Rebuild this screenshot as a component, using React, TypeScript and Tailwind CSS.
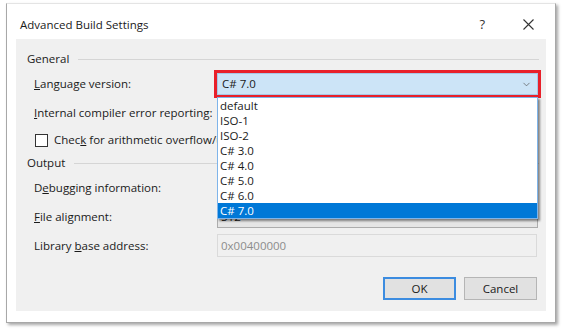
import { ChevronDown } from 'lucide-react';

const versions = ['default', 'ISO-1', 'ISO-2', 'C# 3.0', 'C# 4.0', 'C# 5.0', 'C# 6.0', 'C# 7.0'];

function Label({ children }: { children: React.ReactNode }) {
  return <span className="w-[201px] shrink-0 pl-[18px] whitespace-nowrap">{children}</span>;
}

function Combo({ value, className = '' }: { value: string; className?: string }) {
  return (
    <div
      className={`flex h-[22px] w-[321px] items-center justify-between border border-[#acacac] bg-[#e5e5e5] pr-[6px] pl-[3px] ${className}`}
    >
      <span>{value}</span>
      <ChevronDown className="size-[11px] text-[#444]" strokeWidth={1.5} />
    </div>
  );
}

export default function App() {
  return (
    <div
      className="h-[329px] w-[562px] overflow-hidden bg-white pt-[3px] pl-[6px] text-[11.5px] text-[#1a1a1a]"
      style={{ fontFamily: '"Open Sans", "Noto Sans", sans-serif' }}
    >
      <div className="flex h-[320px] w-[550px] flex-col border border-[#a8a8a8] border-t-[#e4e4e4] bg-white shadow-[2px_2px_3px_rgba(0,0,0,0.35)]">
        {/* title bar */}
        <div className="flex h-[35px] shrink-0 items-center pt-[6px] pl-[13px] text-[11.5px]">
          <span className="flex-1">Advanced Build Settings</span>
          <span className="mr-[38px] text-[13px] text-[#333]">?</span>
          <svg width="11" height="11" viewBox="0 0 11 11" className="mr-[21px]">
            <path d="M0.5 0.5 L10.5 10.5 M10.5 0.5 L0.5 10.5" stroke="#333" strokeWidth="1.1" />
          </svg>
        </div>

        {/* client area */}
        <div className="relative mx-[9px] h-[272px] bg-[#f0f0f0]">
          <div className="mt-[10px] flex h-[20px] items-center pl-[11px]">
            <span>General</span>
            <div className="ml-[9px] mr-[7px] h-px flex-1 bg-[#d5d5d5]" />
          </div>

          <div className="mt-[4px] flex h-[22px] items-center">
            <Label>
              <u>L</u>anguage version:
            </Label>
            <div className="-ml-[3px] flex h-[28px] w-[327px] items-center border-[3px] border-[#e8202a]">
              <div className="flex h-full w-full items-center justify-between border border-[#a7c7e6] bg-[#cce4f7] pr-[5px] pl-[4px]">
                <span>C# 7.0</span>
                <ChevronDown className="size-[11px] text-[#555]" strokeWidth={1.5} />
              </div>
            </div>
          </div>

          <div className="mt-[7px] flex h-[22px] items-center">
            <Label>
              <u>I</u>nternal compiler error reporting:
            </Label>
          </div>

          <div className="mt-[6px] flex h-[20px] w-[201px] items-center overflow-hidden pl-[19px]">
            <span className="h-[13px] w-[13px] shrink-0 border border-[#333] bg-white" />
            <span className="ml-[6px] whitespace-nowrap">
              Chec<u>k</u> for arithmetic overflow/underflow
            </span>
          </div>

          <div className="mt-[3px] flex h-[20px] items-center pl-[11px]">
            <span>Output</span>
            <div className="ml-[9px] mr-[7px] h-px flex-1 bg-[#d5d5d5]" />
          </div>

          <div className="mt-[4px] flex h-[22px] items-center">
            <Label>
              D<u>e</u>bugging information:
            </Label>
          </div>

          <div className="mt-[7px] flex h-[22px] items-center">
            <Label>
              <u>F</u>ile alignment:
            </Label>
            <Combo value="512" />
          </div>

          <div className="mt-[6px] flex h-[23px] items-center">
            <Label>
              Library <u>b</u>ase address:
            </Label>
            <div className="flex h-full w-[320px] items-center border border-[#dadada] bg-[#f0f0f0] pl-[3px] text-[#8c8c8c]">
              0x00400000
            </div>
          </div>

          <div className="mt-[20px] flex h-[23px] justify-end gap-[8px] pr-[9px]">
            <button className="w-[73px] border-2 border-[#3c8ce0] bg-[#e1e1e1]">OK</button>
            <button className="w-[73px] border border-[#b5b5b5] bg-[#e1e1e1]">Cancel</button>
          </div>

          {/* open dropdown list */}
          <div className="absolute top-[58px] left-[201px] w-[321px] border border-[#7eb4ea] bg-white shadow-[2px_2px_2px_rgba(0,0,0,0.45)]">
            {versions.map((v) => (
              <div
                key={v}
                className={`flex h-[15px] items-center pl-[2px] leading-none ${v === 'C# 7.0' ? 'bg-[#0078d7] text-white' : ''}`}
              >
                {v}
              </div>
            ))}
          </div>
        </div>
      </div>
    </div>
  );
}
